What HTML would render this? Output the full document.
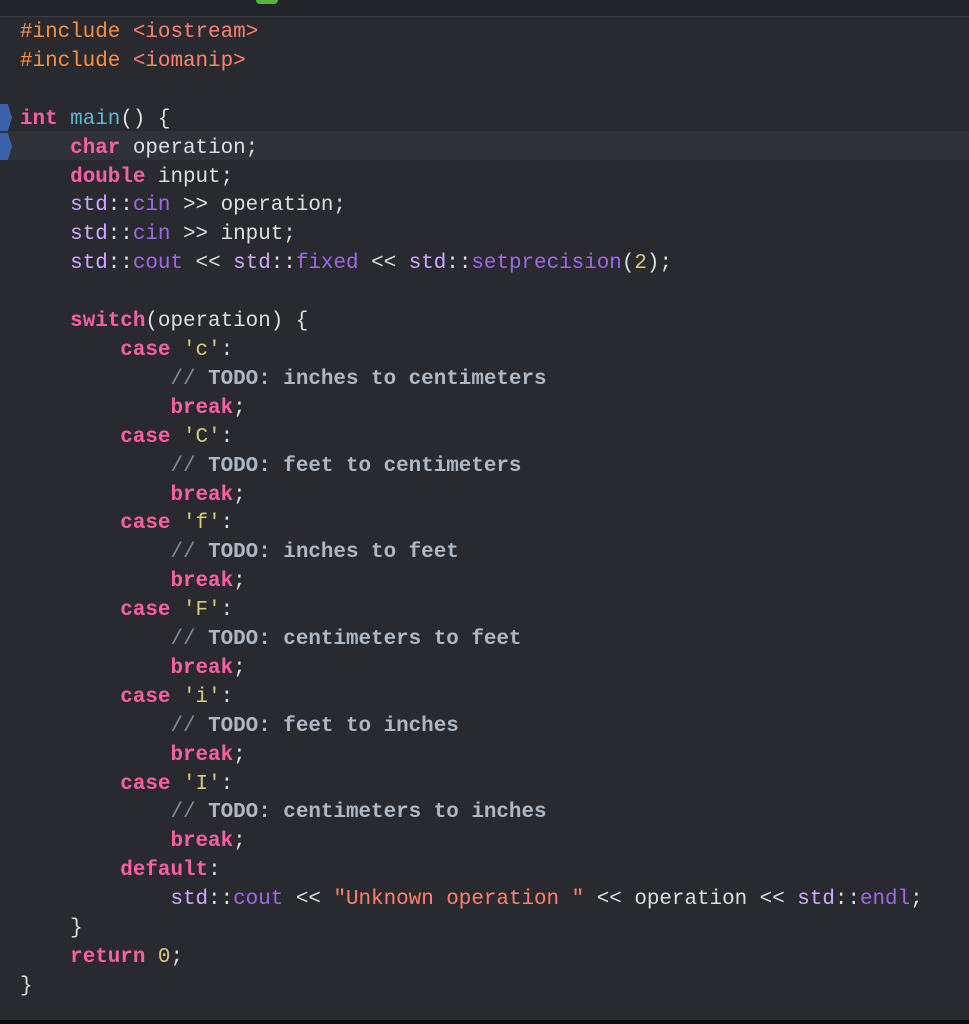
<!DOCTYPE html>
<html><head><meta charset="utf-8"><style>
html,body{margin:0;padding:0;}
body{width:969px;height:1024px;background:#292a30;position:relative;overflow:hidden;font-family:"Liberation Mono",monospace;font-size:20.9px;color:#dfdfe0;}
.top{position:absolute;left:0;top:0;width:969px;height:16px;background:#232429;border-bottom:1px solid #3a3b40;}
.green{position:absolute;left:256px;top:0;width:22px;height:4px;background:#58b33d;border-radius:0 0 4px 4px;}
.bot{position:absolute;left:0;top:1020px;width:969px;height:4px;background:#0d0d0f;}
.hl{position:absolute;left:0;top:131px;width:969px;height:29px;background:#2f3239;}
.bp{position:absolute;left:0;width:12px;height:27px;background:#3d62ad;clip-path:polygon(0 0,65% 0,100% 50%,65% 100%,0 100%);}
pre{margin:0;position:absolute;left:20px;top:19px;line-height:28.9px;font-family:inherit;font-size:inherit;white-space:pre;}
.k{color:#fc5fa3;font-weight:bold}
.p{color:#fd8f3f}
.s{color:#ff8170}
.f{color:#5fb5d3}
.t{color:#d0a8ff}
.m{color:#a167e6}
.n{color:#d9c97c}
.c{color:#7f8c98}
.cb{color:#aeb8c4;font-weight:bold}
</style></head><body>
<div class="top"><div class="green"></div></div>
<div class="hl"></div>
<div class="bp" style="top:104px"></div>
<div class="bp" style="top:133px"></div>
<pre><span class="p">#include</span> <span class="s">&lt;iostream&gt;</span>
<span class="p">#include</span> <span class="s">&lt;iomanip&gt;</span>

<span class="k">int</span> <span class="f">main</span>() {
    <span class="k">char</span> operation;
    <span class="k">double</span> input;
    <span class="t">std</span>::<span class="m">cin</span> &gt;&gt; operation;
    <span class="t">std</span>::<span class="m">cin</span> &gt;&gt; input;
    <span class="t">std</span>::<span class="m">cout</span> &lt;&lt; <span class="t">std</span>::<span class="m">fixed</span> &lt;&lt; <span class="t">std</span>::<span class="m">setprecision</span>(<span class="n">2</span>);

    <span class="k">switch</span>(operation) {
        <span class="k">case</span> <span class="n">'c'</span>:
            <span class="c">//</span> <span class="cb">TODO: inches to centimeters</span>
            <span class="k">break</span>;
        <span class="k">case</span> <span class="n">'C'</span>:
            <span class="c">//</span> <span class="cb">TODO: feet to centimeters</span>
            <span class="k">break</span>;
        <span class="k">case</span> <span class="n">'f'</span>:
            <span class="c">//</span> <span class="cb">TODO: inches to feet</span>
            <span class="k">break</span>;
        <span class="k">case</span> <span class="n">'F'</span>:
            <span class="c">//</span> <span class="cb">TODO: centimeters to feet</span>
            <span class="k">break</span>;
        <span class="k">case</span> <span class="n">'i'</span>:
            <span class="c">//</span> <span class="cb">TODO: feet to inches</span>
            <span class="k">break</span>;
        <span class="k">case</span> <span class="n">'I'</span>:
            <span class="c">//</span> <span class="cb">TODO: centimeters to inches</span>
            <span class="k">break</span>;
        <span class="k">default</span>:
            <span class="t">std</span>::<span class="m">cout</span> &lt;&lt; <span class="s">"Unknown operation "</span> &lt;&lt; operation &lt;&lt; <span class="t">std</span>::<span class="m">endl</span>;
    }
    <span class="k">return</span> <span class="n">0</span>;
}</pre>
<div class="bot"></div>
</body></html>
